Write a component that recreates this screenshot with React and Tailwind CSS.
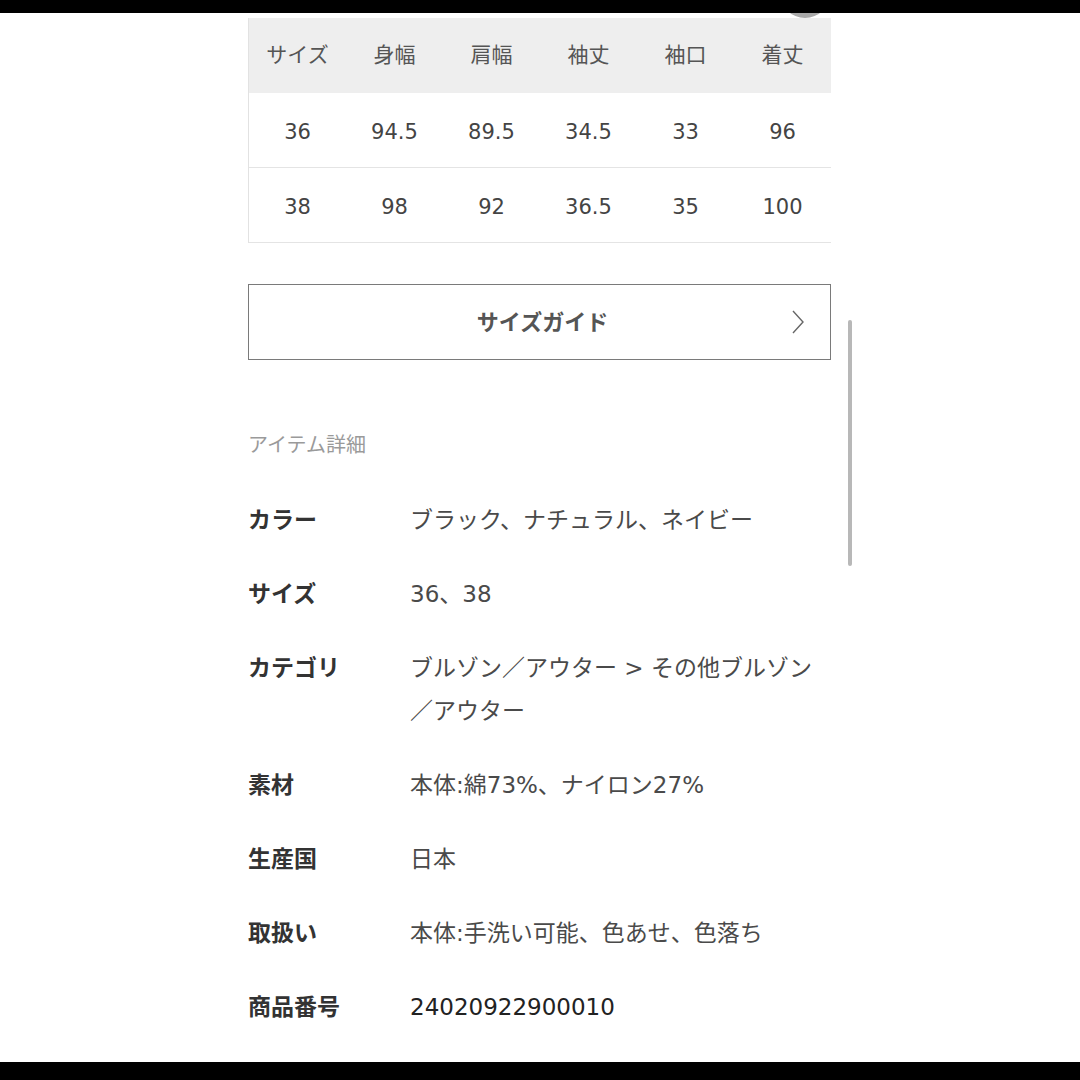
import React from 'react';

const header = ['サイズ', '身幅', '肩幅', '袖丈', '袖口', '着丈'];
const rows = [
  ['36', '94.5', '89.5', '34.5', '33', '96'],
  ['38', '98', '92', '36.5', '35', '100'],
];

const details = [
  { label: 'カラー', value: 'ブラック、ナチュラル、ネイビー' },
  { label: 'サイズ', value: '36、38' },
  { label: 'カテゴリ', value: 'ブルゾン／アウター > その他ブルゾン／アウター' },
  { label: '素材', value: '本体:綿73%、ナイロン27%' },
  { label: '生産国', value: '日本' },
  { label: '取扱い', value: '本体:手洗い可能、色あせ、色落ち' },
  { label: '商品番号', value: '24020922900010', dark: true },
];

export default function App() {
  return (
    <div
      className="relative w-[1080px] h-[1080px] bg-white flex flex-col overflow-hidden"
      style={{ fontFamily: '"DejaVu Sans", "Noto Sans CJK JP", sans-serif' }}
    >
      {/* little grey handle peeking under the top bar */}
      <div className="absolute left-[780px] top-[-32px] w-[50px] h-[50px] rounded-full bg-[#a8a8a8]" />
      <div className="relative z-10 h-[13px] bg-black shrink-0" />

      <div className="flex-1 pl-[248px] pt-[5px]">
        <div className="w-[583px]">
          {/* size table */}
          <div className="border-l border-[#e2e2e2]">
            <div className="grid grid-cols-6 h-[75px] bg-[#eeeeee] text-[21px] text-[#555]">
              {header.map((h) => (
                <div key={h} className="flex items-center justify-center pt-[1px]">{h}</div>
              ))}
            </div>
            {rows.map((r, i) => (
              <div key={i} className="grid grid-cols-6 h-[75px] border-b border-[#e4e4e4] text-[21px] text-[#444]">
                {r.map((c, j) => (
                  <div key={j} className="flex items-center justify-center pt-[5px]">{c}</div>
                ))}
              </div>
            ))}
          </div>

          {/* size guide button */}
          <div className="mt-[41px] h-[76px] border border-[#7a7a7a] relative flex items-center justify-center">
            <span className="text-[22px] font-bold text-[#555] translate-x-[3px]">サイズガイド</span>
            <svg className="absolute right-[25px] top-1/2 -translate-y-1/2" width="14" height="26" viewBox="0 0 14 26" fill="none">
              <polyline points="2,2 12,13 2,24" stroke="#666" strokeWidth="1.4" />
            </svg>
          </div>

          {/* item details */}
          <div className="mt-[72px] text-[20px] leading-[26px] text-[#9a9a9a]">アイテム詳細</div>
          <div className="mt-[41px] grid grid-cols-[162px_1fr] gap-y-[31px]">
            {details.map((d) => (
              <React.Fragment key={d.label}>
                <div className="text-[23px] leading-[43px] font-bold text-[#333]">{d.label}</div>
                <div className={`text-[23px] leading-[43px] pr-[10px] ${d.dark ? 'text-[#222]' : 'text-[#4a4a4a]'}`}>{d.value}</div>
              </React.Fragment>
            ))}
          </div>
        </div>
      </div>

      {/* scrollbar */}
      <div className="absolute left-[848px] top-[320px] w-[4px] h-[246px] rounded-full bg-[#b8b8b8]" />

      <div className="h-[18px] bg-black shrink-0" />
    </div>
  );
}
